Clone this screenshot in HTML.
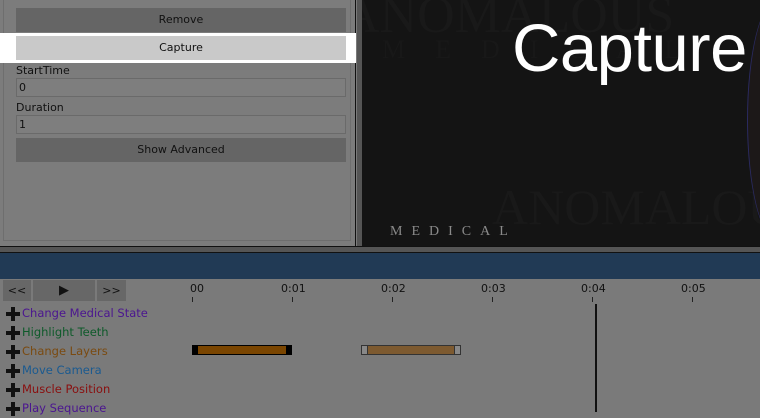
<!DOCTYPE html>
<html><head><style>
*{margin:0;padding:0;box-sizing:border-box}
body{width:760px;height:412px;overflow:hidden;background:#7a7a7a;font-family:"DejaVu Sans","Liberation Sans",sans-serif;position:relative}
.a{position:absolute}
.btn{position:absolute;left:16px;width:330px;height:24px;background:#656565;color:#111;font-size:11px;text-align:center;line-height:24px}
.lbl{position:absolute;left:16px;font-size:11px;color:#111}
.inp{position:absolute;left:16px;width:330px;height:19px;border:1px solid #6a6a6a;background:#7e7e7e;font-size:11px;color:#111;padding-left:2px;line-height:17px}
.tk{position:absolute;top:297px;width:1px;height:5px;background:#222}
.tl{position:absolute;top:282px;font-size:11px;color:#111}
.row{position:absolute;left:6px;font-size:11.5px;height:19px;line-height:19px;padding-left:16px}
.row:before{content:"";position:absolute;left:0;width:14px;height:4px;background:#111;top:8px}
.row:after{content:"";position:absolute;left:5px;top:3px;width:4px;height:14px;background:#111}
.tb{position:absolute;top:280px;height:21px;background:#676767;color:#111;font-size:11px;text-align:center;line-height:21px}
</style></head><body>
<div class="a" style="left:0;top:0;width:356px;height:246px;background:#7c7c7c;border-right:1px solid #111"></div>
<div class="a" style="left:3px;top:-2px;width:348px;height:243px;border:1px solid #6e6e6e"></div>
<div class="btn" style="top:8px">Remove</div>
<div class="a" style="left:0;top:33px;width:356px;height:30px;background:#fff"></div>
<div class="btn" style="top:36px;background:#c9c9c9">Capture</div>
<div class="lbl" style="top:64px">StartTime</div>
<div class="inp" style="top:78px">0</div>
<div class="lbl" style="top:101px">Duration</div>
<div class="inp" style="top:115px">1</div>
<div class="btn" style="top:138px">Show Advanced</div>
<div class="a" style="left:357px;top:0;width:5px;height:247px;background:#555"></div>
<div class="a" style="left:362px;top:0;width:398px;height:247px;background:#141414;overflow:hidden">
<div class="a" style="left:-20px;top:-14px;font-family:'Liberation Serif',serif;font-size:52px;color:#191919">ANOMALOUS</div>
<div class="a" style="left:20px;top:35px;font-family:'Liberation Serif',serif;font-size:26px;letter-spacing:30px;color:#181818">MEDICAL</div>
<div class="a" style="left:130px;top:178px;font-family:'Liberation Serif',serif;font-size:50px;color:#191919">ANOMALOUS</div>
<div class="a" style="left:28px;top:224px;font-family:'Liberation Serif',serif;font-size:14px;letter-spacing:9px;color:#8a8a8a">MEDICAL</div>
<div class="a" style="left:385px;top:0;width:60px;height:240px;border-radius:50%;background:#1c1818;border-left:1px solid #2a2a60"></div>
<div class="a" style="left:150px;top:10px;font-family:'Liberation Sans',sans-serif;font-size:67px;color:#fff;letter-spacing:-0.5px">Capture</div>
</div>
<div class="a" style="left:0;top:246px;width:760px;height:1px;background:#111"></div>
<div class="a" style="left:0;top:247px;width:760px;height:5px;background:#555"></div>
<div class="a" style="left:0;top:252px;width:760px;height:1px;background:#111"></div>
<div class="a" style="left:0;top:253px;width:760px;height:26px;background:#213a55"></div>
<div class="tb" style="left:3px;width:28px">&lt;&lt;</div>
<div class="tb" style="left:33px;width:62px;font-size:13px">▶</div>
<div class="tb" style="left:97px;width:29px">&gt;&gt;</div>
<div class="tl" style="left:190px">00</div><div class="tk" style="left:192px"></div>
<div class="tl" style="left:281px">0:01</div><div class="tk" style="left:292px"></div>
<div class="tl" style="left:381px">0:02</div><div class="tk" style="left:392px"></div>
<div class="tl" style="left:481px">0:03</div><div class="tk" style="left:492px"></div>
<div class="tl" style="left:581px">0:04</div><div class="tk" style="left:592px"></div>
<div class="tl" style="left:681px">0:05</div><div class="tk" style="left:692px"></div>
<div class="a" style="left:595px;top:304px;width:2px;height:108px;background:#111"></div>
<div class="row" style="top:304px;color:#4b1590">Change Medical State</div>
<div class="row" style="top:323px;color:#0e5a2a">Highlight Teeth</div>
<div class="row" style="top:342px;color:#7a4a10">Change Layers</div>
<div class="row" style="top:361px;color:#1a5a90">Move Camera</div>
<div class="row" style="top:380px;color:#8a0e0e">Muscle Position</div>
<div class="row" style="top:399px;color:#4b1590">Play Sequence</div>
<div class="a" style="left:192px;top:345px;width:100px;height:10px;background:#000;padding:1px 6px"><div style="width:100%;height:100%;background:#7a4500"></div></div>
<div class="a" style="left:361px;top:345px;width:100px;height:10px;background:#888;border:1px solid #333;padding:0 5px"><div style="width:100%;height:100%;background:#7d5a30;border-left:1px solid #333;border-right:1px solid #333"></div></div>
</body></html>
